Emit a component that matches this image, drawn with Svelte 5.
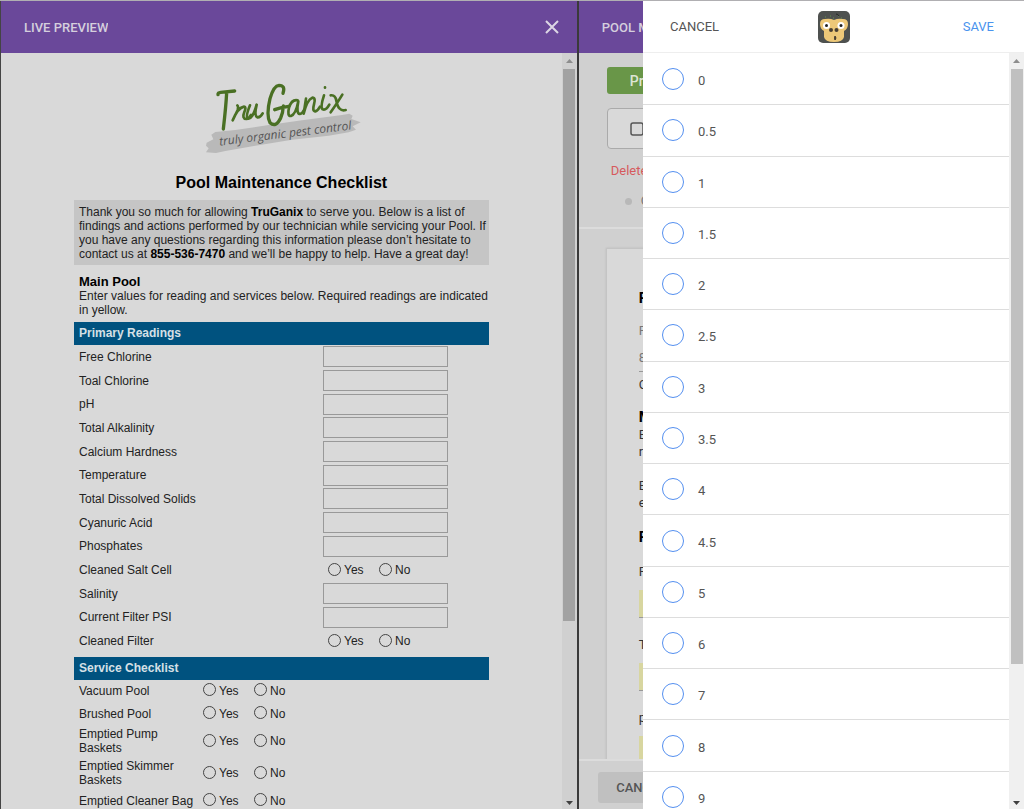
<script>
  let readings = [
    { name: "Free Chlorine" },
    { name: "Toal Chlorine" },
    { name: "pH" },
    { name: "Total Alkalinity" },
    { name: "Calcium Hardness" },
    { name: "Temperature" },
    { name: "Total Dissolved Solids" },
    { name: "Cyanuric Acid" },
    { name: "Phosphates" },
    { name: "Cleaned Salt Cell", yesNo: true },
    { name: "Salinity" },
    { name: "Current Filter PSI" },
    { name: "Cleaned Filter", yesNo: true },
  ];

  let services = [
    "Vacuum Pool",
    "Brushed Pool",
    "Emptied Pump Baskets",
    "Emptied Skimmer Baskets",
    "Emptied Cleaner Bag",
  ];

  let options = ["0", "0.5", "1", "1.5", "2", "2.5", "3", "3.5", "4", "4.5", "5", "6", "7", "8", "9"];
  let selected = "";
</script>

{#snippet yesNo(name)}
  <span class="yes-no">
    <label><input type="radio" {name} value="yes" />Yes</label>
    <label><input type="radio" {name} value="no" />No</label>
  </span>
{/snippet}

{#snippet scrollbar(size)}
  <div class="scrollbar">
    <svg width="7" height="4" viewBox="0 0 7 4"><path d="M0 4 3.500 0 7 4z" fill="#8d8d8d" /></svg>
    <div class="track"><div class="thumb" style="height: {size}%"></div></div>
    <svg width="7" height="4" viewBox="0 0 7 4"><path d="M0 0h7L3.500 4z" fill="#404040" /></svg>
  </div>
{/snippet}

<div class="app">
  <section class="preview">
    <header class="bar">
      <h2>LIVE PREVIEW</h2>
      <button class="close" aria-label="Close preview">
        <svg width="14" height="14" viewBox="0 0 14 14"><path d="M1 1l12 12M13 1L1 13" stroke="#dcd6e4" stroke-width="2" /></svg>
      </button>
    </header>
    <div class="preview-body">
      <div class="paper">
        <svg class="logo" width="158" height="76" viewBox="38 42 474 228" role="img" aria-label="TruGanix truly organic pest control">
          <path d="M52 218l20-10-6-14 12-8 60-6 100-15 100-14 120-16 22-4 10 6-4 10 28 10-24 12 10 10-22 8-60 10-110 12-110 18-90 16-28 6-30-2 8-12-8-8z" fill="#b9b9b9" />
          <g fill="none" stroke="#4a7024" stroke-width="8" stroke-linecap="round" stroke-linejoin="round">
            <path d="M86 74q-1-6 8-7l42-4M112 68q-2 40-10 109" stroke-width="10" />
            <path d="M144 106q4 4 1 14l-15 31q16-38 34-41 8 1 1 16-8 20 6 21 8-1 14-12" />
            <path d="M182 106q-14 34-7 40 14 4 27-42-8 34 2 38 9 1 16-12" />
            <path d="M281 70q8-24-12-24-16 1-27 40-12 50 0 72 18 16 32-14 7-16 8-36M256 119q20-8 42-10" stroke-width="10" />
            <path d="M325 91q-18-4-26 22-6 26 6 25 14-4 22-44-7 36 4 38 7 0 13-12" />
            <path d="M350 86l-7 45q10-42 26-48 11 0 5 20-6 21 4 21 8-2 14-14" />
            <path d="M404 76q-12 36-4 42 10 4 20-14M407 52v1" />
            <path d="M424 76q14-2 17 16 6 34 28 28M459 74q-12 20-35 53" />
          </g>
          <text x="91" y="227" transform="rotate(-7 91 227)">truly organic pest control</text>
        </svg>

        <h1>Pool Maintenance Checklist</h1>
        <p class="intro">
          Thank you so much for allowing <b>TruGanix</b> to serve you. Below is a list of findings and
          actions performed by our technician while servicing your Pool. If you have any questions
          regarding this information please don’t hesitate to contact us at <b>855-536-7470</b> and
          we’ll be happy to help. Have a great day!
        </p>
        <div class="section-text">
          <h3>Main Pool</h3>
          <p>Enter values for reading and services below. Required readings are indicated in yellow.</p>
        </div>

        <h4>Primary Readings</h4>
        <div class="readings">
          {#each readings as reading, i}
            <div class="reading" class:choice={reading.yesNo}>
              {#if reading.yesNo}
                <span>{reading.name}</span>
                {@render yesNo("reading" + i)}
              {:else}
                <label for="reading{i}">{reading.name}</label>
                <input id="reading{i}" type="text" />
              {/if}
            </div>
          {/each}
        </div>

        <h4>Service Checklist</h4>
        {#each services as service, i}
          <div class="service">
            <span>{service}</span>
            {@render yesNo("service" + i)}
          </div>
        {/each}
      </div>
      {@render scrollbar(76)}
    </div>
  </section>

  <section class="editor">
    <header class="bar">
      <h2>POOL MAINTENANCE</h2>
    </header>
    <div class="tools">
      <button class="print">Preview</button>
      <button class="outlined">
        <svg width="14" height="14" viewBox="0 0 14 14"><rect x="1" y="1" width="12" height="12" rx="2" fill="none" stroke="#555" stroke-width="1.500" /></svg>
        Options
      </button>
      <a href="#delete">Delete</a>
      <div class="status"><i></i>Offline</div>
    </div>
    <div class="canvas">
      <div class="sheet">
        <h3 class="first">Pool</h3>
        <p class="grey">Phone</p>
        <p class="grey phone">855</p>
        <p class="call">Call</p>
        <h3>Main</h3>
        <p>Enter<br />readings</p>
        <p class="gap">Enter<br />each</p>
        <h3 class="primary">Primary</h3>
        <label class="field">Free<input type="text" /></label>
        <label class="field">Total<input type="text" /></label>
        <label class="field">pH<input type="text" /></label>
      </div>
    </div>
    <footer><button>CANCEL</button></footer>
  </section>

  <aside class="drawer">
    <header>
      <button>CANCEL</button>
      <svg width="32" height="32" viewBox="0 0 32 32" role="img" aria-label="Gorilla logo">
        <rect width="32" height="32" rx="5" fill="#4e514f" />
        <path d="M2 13q0-5 5-5 5-1 9 1 4-2 9-1 5 0 5 5 0 5-4 7v6q-1 5-10 5T6 26v-6q-4-2-4-7z" fill="#edc878" />
        <circle cx="8.500" cy="14.500" r="3.500" fill="#fff" /><circle cx="23" cy="14.500" r="3.500" fill="#fff" />
        <circle cx="8.500" cy="14.500" r="1.500" fill="#222" /><circle cx="23" cy="14.500" r="1.500" fill="#222" />
        <circle cx="13" cy="19" r="2" fill="#473e32" /><circle cx="18.500" cy="19" r="2" fill="#473e32" />
        <path d="M17 25q2 2 0 4-1-2 0-4z" fill="#473e32" stroke="#473e32" />
        <path d="M7 6h1M12 5h1M15 7h1M20 5h1M23 7h1" stroke="#62934f" />
        <path d="M18 3q2 0 3 2" fill="none" stroke="#252827" />
      </svg>
      <button class="save">SAVE</button>
    </header>
    <div class="drawer-body">
      <div class="options">
        {#each options as option}
          <label>
            <input type="radio" name="value" value={option} bind:group={selected} />
            <span>{option}</span>
          </label>
        {/each}
      </div>
      {@render scrollbar(82)}
    </div>
  </aside>
</div>

<style>
  :global(body) {
    margin: 0;
  }

  .app {
    position: relative;
    display: grid;
    grid-template-columns: 13fr 10fr;
    height: 100vh;
    box-sizing: border-box;
    overflow: hidden;
    border-top: 1px solid #b0afb2;
    font-family: Roboto, sans-serif;
    background: #d0d0d0;
  }

  h1, h2, h3, h4, p {
    margin: 0;
  }

  button {
    border: 0;
    padding: 0;
    background: none;
    font-family: inherit;
    cursor: pointer;
  }

  .preview,
  .editor {
    display: flex;
    flex-direction: column;
    min-width: 0;
    min-height: 0;
  }

  .preview {
    border-left: 1px solid #444;
    border-right: 2px solid #3a3a3a;
    background: #d9d9d9;
  }

  .bar {
    display: flex;
    flex: none;
    align-items: center;
    justify-content: space-between;
    height: 52px;
    padding: 0 18px 0 23px;
    background: #6a489a;
  }

  .bar h2 {
    overflow: hidden;
    white-space: nowrap;
    font-size: 13px;
    font-weight: 500;
    color: #d5cfdd;
  }

  .close {
    display: flex;
  }

  .preview-body,
  .drawer-body {
    display: flex;
    flex: 1;
    min-height: 0;
    overflow: hidden;
  }

  .paper {
    flex: 1;
    padding: 31px 73px 0;
    font-family: "Liberation Sans", Arial, sans-serif;
    font-size: 12px;
    line-height: 14px;
    color: #222;
  }

  .logo {
    display: block;
    margin: 0 auto;
    overflow: visible;
  }

  .logo text {
    font: italic 36px "Open Sans", sans-serif;
    fill: #555;
  }

  h1 {
    margin: 13px 0 7px;
    text-align: center;
    font-size: 16px;
    line-height: 20px;
    color: #000;
  }

  .intro {
    padding: 5px 0 4px 5px;
    background: #c5c5c5;
  }

  .intro b,
  .section-text h3 {
    color: #000;
  }

  .section-text {
    padding: 10px 0 5px 5px;
  }

  .section-text h3 {
    font-size: 13px;
    line-height: 14px;
  }

  h4 {
    padding-left: 5px;
    font-size: 12px;
    line-height: 23px;
    color: #d6e0e6;
    background: #00527f;
  }

  .readings {
    display: grid;
    grid-template-rows: repeat(13, 1fr);
    height: 308px;
    padding-bottom: 4px;
  }

  .reading {
    display: grid;
    grid-template-columns: 249px 1fr;
    align-items: center;
    min-height: 0;
  }

  .reading > :first-child {
    padding-left: 5px;
  }

  .reading.choice .yes-no {
    padding-left: 5px;
  }

  .reading input[type="text"] {
    width: 125px;
    height: 21px;
    box-sizing: border-box;
    border: 1px solid #999;
    background: transparent;
  }

  .service {
    display: grid;
    grid-template-columns: 124px 1fr;
    align-items: center;
    padding: 1px 0 3px 5px;
    min-height: 19px;
  }

  .yes-no {
    display: flex;
  }

  .yes-no label {
    display: flex;
    align-items: center;
    gap: 3px;
    width: 51px;
  }

  .yes-no input {
    appearance: none;
    width: 13px;
    height: 13px;
    margin: 0 0 2px;
    border: 1px solid #444;
    border-radius: 50%;
  }

  .scrollbar {
    display: flex;
    flex: none;
    flex-direction: column;
    align-items: center;
    width: 15px;
    padding: 6px 0 4px;
    background: #d0d0d0;
  }

  .scrollbar svg {
    flex: none;
  }

  .track {
    flex: 1;
    width: 12px;
    margin: 6px 0;
  }

  .thumb {
    background: #a2a2a2;
  }

  .tools {
    flex: none;
    height: 176px;
    box-sizing: border-box;
    padding: 14px 28px 0;
    border-bottom: 2px solid #dcdcdc;
    font-size: 13px;
  }

  .tools button {
    display: flex;
    align-items: center;
    width: 100%;
    box-sizing: border-box;
    padding-left: 22px;
    border-radius: 3px;
    font-size: 14px;
  }

  .tools .print {
    height: 27px;
    margin-bottom: 14px;
    padding-left: 23px;
    color: #dde5d5;
    font-weight: 500;
    background: #699648;
  }

  .tools .outlined {
    gap: 10px;
    height: 41px;
    margin-bottom: 14px;
    border: 1px solid #aaa;
    border-radius: 4px;
    background: #d9d9d9;
  }

  .tools a {
    display: block;
    padding-left: 4px;
    line-height: 16px;
    text-decoration: none;
    color: #d65a5d;
  }

  .status {
    display: flex;
    align-items: center;
    gap: 9px;
    padding: 14px 0 0 18px;
    line-height: 16px;
    color: #777;
  }

  .status i {
    width: 7px;
    height: 7px;
    border-radius: 50%;
    background: #b8b8b8;
  }

  .canvas {
    flex: 1;
    min-height: 0;
    overflow: hidden;
    padding: 19px 27px 0;
  }

  .sheet {
    padding: 41px 32px;
    border: 1px solid #c4c4c4;
    box-shadow: 0 0 2px #bbb;
    font-size: 13px;
    line-height: 17px;
    color: #333;
    background: #d9d9d9;
  }

  .sheet h3 {
    font-size: 15px;
    line-height: 17px;
    color: #000;
  }

  .sheet .grey {
    margin-top: 15px;
    color: #777;
  }

  .sheet .phone {
    margin-top: 10px;
    padding-bottom: 5px;
    border-bottom: 1px solid #999;
  }

  .sheet .call {
    margin: 4px 0 16px;
  }

  .sheet .gap {
    margin-top: 17px;
  }

  .sheet .primary {
    margin: 18px 0 17px;
  }

  .field {
    display: block;
    margin-bottom: 18px;
  }

  .field input {
    display: block;
    width: 100%;
    height: 28px;
    box-sizing: border-box;
    margin-top: 10px;
    border: 0;
    border-bottom: 1px solid #999;
    background: #d8d6a0;
  }

  .editor footer {
    flex: none;
    padding: 11px 19px 6px;
    border-top: 2px solid #dcdcdc;
  }

  .editor footer button {
    width: 86px;
    height: 31px;
    border-radius: 3px;
    font-size: 13px;
    font-weight: 500;
    color: #555;
    background: #c0c0c0;
  }

  .drawer {
    position: absolute;
    top: 0;
    right: 0;
    bottom: 0;
    display: flex;
    flex-direction: column;
    width: 381px;
    background: #fff;
  }

  .drawer header {
    display: flex;
    flex: none;
    align-items: center;
    justify-content: space-between;
    height: 52px;
    box-sizing: border-box;
    padding: 0 30px 0 27px;
    border-bottom: 1px solid #eee;
  }

  .drawer header button {
    width: 60px;
    text-align: left;
    font-size: 13px;
    color: #555;
  }

  .drawer header .save {
    width: 56px;
    text-align: right;
    color: #4a93ee;
  }

  .options {
    display: grid;
    flex: 1;
    grid-template-rows: repeat(15, 1fr);
    height: 769px;
    padding-top: 1px;
  }

  .options label {
    display: flex;
    align-items: center;
    gap: 14px;
    padding-left: 19px;
    border-bottom: 1px solid #ddd;
    font-size: 13px;
    color: #555;
  }

  .options input {
    appearance: none;
    width: 22px;
    height: 22px;
    margin: 0;
    border: 1px solid #5590f0;
    border-radius: 50%;
  }

  .options input:checked {
    background: #5590f0;
  }

  .options span {
    padding-top: 3px;
  }

  .drawer .scrollbar {
    background: #f0f0f0;
  }

  .drawer .thumb {
    background: #c0c0c0;
  }
</style>
